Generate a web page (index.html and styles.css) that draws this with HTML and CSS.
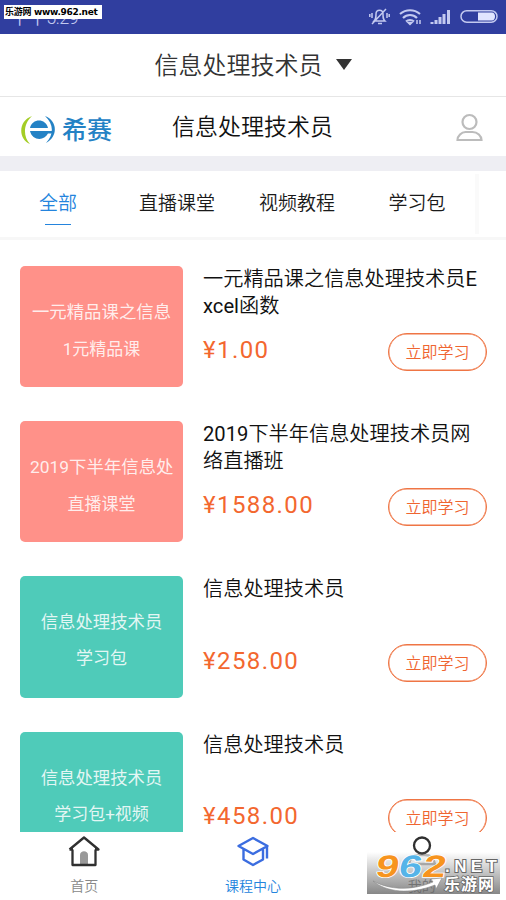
FILE: index.html
```html
<!DOCTYPE html>
<html lang="zh-CN">
<head>
<meta charset="utf-8">
<title>信息处理技术员</title>
<link rel="stylesheet" href="styles.css">
</head>
<body>
<div class="app">
  <div class="status">
    <span class="time">下午5:29</span>
    <svg class="status-icons" width="134" height="24" viewBox="0 0 134 24" fill="none" stroke="#c3c9f0" stroke-width="1.5">
      <path d="M4 17h11c-2-2-2-3-2-7 0-5-7-5-7 0 0 4 0 5-2 7ZM8 19.5h4M2 20 16 5M2 9v5M-.2 10v3M17 9v5M19.2 10v3"/>
      <path d="M30 10c6-5 14-5 20 0M33 14c4-4 10-4 14 0M36 17.500c2-2 6-2 8 0" stroke-width="2.200"/>
      <path d="m38 18.500 2 2 2-2Z" fill="#c3c9f0"/>
      <path d="M47 16v4M50 16v4" stroke-width="1.5"/>
      <path d="M62 20v-2M66 20v-4M70 20v-7M74 20v-10M78.500 20V6" stroke-width="3"/>
      <rect x="91" y="6.700" width="36" height="11.500" rx="5.750"/>
      <path d="M108 8.500h14c4 0 4 8 0 8h-14Z" fill="#e1e5ff" stroke="none"/>
    </svg>
  </div>
  <header class="subject"><span>信息处理技术员</span><i class="caret"></i></header>
  <div class="brandbar">
    <div class="brand">
      <svg width="38" height="32" viewBox="0 0 38 32">
        <path d="M12 2C-2 7-2 25 10 30 3 23 3 10 12 2Z" fill="#a4cd25"/>
        <path d="M25 2c13 5 13 21 1 27 8-8 8-19-1-27Z" fill="#2482c5"/>
        <path d="M10 14c2-10 16-10 18 0ZM10 17h24v2.500h-6c-4 8-16 7-18-2.500Z" fill="#2482c5"/>
      </svg>
      <span>希赛</span>
    </div>
    <h1>信息处理技术员</h1>
    <svg class="person" width="28" height="30" viewBox="0 0 28 30" fill="none" stroke="#bcbcbc" stroke-width="2.200"><circle cx="14.500" cy="9" r="7"/><path d="M2.500 27c0-4 4-8 8-8h7c5 0 9 4 9 8Z"/></svg>
  </div>
  <nav class="tabs">
    <span class="tab active">全部</span><span class="tab">直播课堂</span><span class="tab">视频教程</span><span class="tab">学习包</span>
  </nav>
  <main class="list">
    <article class="course">
      <div class="cover coral"><p class="name">一元精品课之信息</p><p class="kind">1元精品课</p></div>
      <div class="info"><h2>一元精品课之信息处理技术员<span class="latin">Excel</span>函数</h2><div class="buy"><b>¥1.00</b><span class="btn">立即学习</span></div></div>
    </article>
    <article class="course">
      <div class="cover coral"><p class="name">2019下半年信息处</p><p class="kind">直播课堂</p></div>
      <div class="info"><h2><span class="latin">2019</span>下半年信息处理技术员网络直播班</h2><div class="buy"><b>¥1588.00</b><span class="btn">立即学习</span></div></div>
    </article>
    <article class="course">
      <div class="cover teal"><p class="name">信息处理技术员</p><p class="kind">学习包</p></div>
      <div class="info"><h2>信息处理技术员</h2><div class="buy"><b>¥258.00</b><span class="btn">立即学习</span></div></div>
    </article>
    <article class="course">
      <div class="cover teal"><p class="name">信息处理技术员</p><p class="kind">学习包+视频</p></div>
      <div class="info"><h2>信息处理技术员</h2><div class="buy"><b>¥458.00</b><span class="btn">立即学习</span></div></div>
    </article>
  </main>
  <footer class="bottom">
    <div class="item">
      <svg width="34" height="34" viewBox="0 0 34 34"><path d="M13 29v-9c0-5 8-5 8 0v9Z" fill="#999"/><path d="M5.500 14.500V30h23V14.500M2.500 14.500 17 2.500l14.500 12H28M2.500 14.500H6" fill="none" stroke="#303030" stroke-width="2.300" stroke-linejoin="round"/></svg>
      <span>首页</span>
    </div>
    <div class="item on">
      <svg width="34" height="34" viewBox="0 0 34 34" fill="none" stroke="#3b6de0" stroke-width="2.400" stroke-linejoin="round"><path d="m2.500 11 14.500-8 14.500 8L17 19ZM7.500 14.500v10L17 30l10-5.500v-10M31 11.500v12"/></svg>
      <span>课程中心</span>
    </div>
    <div class="item">
      <svg width="34" height="34" viewBox="0 0 34 34" fill="none" stroke="#303030" stroke-width="2.300"><circle cx="17" cy="10.500" r="8"/><path d="M4 29c1-6 5-9 10-9h6c5 0 9 3 10 9Z" opacity=".35"/></svg>
      <span>我的</span>
    </div>
  </footer>
  <div class="source">乐游网 www.962.net</div>
  <div class="mark">
    <svg width="139" height="42" viewBox="0 0 139 42">
      <g class="digits" transform="skewX(-10)"><text x="12" y="25" textLength="23" lengthAdjust="spacingAndGlyphs" fill="#f7941e">9</text><text x="35" y="25" textLength="23" lengthAdjust="spacingAndGlyphs" fill="#55b4e8">6</text><text x="59" y="25" textLength="23" lengthAdjust="spacingAndGlyphs" fill="#f7941e">2</text></g>
      <path d="M6 29c17 9 38 10 60 1l-2-3 11-1-6 11-1-4C43 43 19 40 6 29Z" fill="#fff" stroke="#888" stroke-width=".6"/>
      <text class="net" x="78" y="20" textLength="52">.NET</text>
      <text class="site" x="77" y="38" textLength="50">乐游网</text>
    </svg>
  </div>
</div>
</body>
</html>
```
FILE: styles.css
```css
* { box-sizing: border-box; }
body { margin: 0; background: #fff; font-family: Roboto, "Noto Sans CJK SC", sans-serif; font-weight: 350; color: #1a1a1a; }
h1, h2, p { margin: 0; font-weight: 350; }
svg { display: block; }
.app { position: relative; width: 506px; height: 900px; overflow: hidden; display: flex; flex-direction: column; }
.status { flex: none; height: 34px; background: #303e9f; display: flex; justify-content: space-between; padding: 4px 2px 0 11px; }
.time { font-size: 18px; line-height: 28px; color: #c3c9f0; letter-spacing: -.4px; }
.status-icons { overflow: visible; }
.subject { flex: none; height: 63px; border-bottom: 1px solid #e6e6e6; display: flex; align-items: center; justify-content: center; gap: 13px; font-size: 24px; line-height: 36px; color: #333; padding: 2px 0 0; }
.caret { border: 8px solid transparent; border-top: 11px solid #333; border-bottom: 0; margin-top: -3px; }
.brandbar { flex: none; height: 59px; display: grid; grid-template-columns: 130px 1fr 130px; align-items: center; padding: 0 21px 0 20px; }
.brand { display: flex; align-items: center; gap: 4px; margin-top: 6px; color: #2482c5; font-size: 25px; font-weight: 500; line-height: 32px; }
.brand span { margin-top: 2px; }
.brandbar h1 { font-size: 23px; line-height: 34px; text-align: center; color: #111; white-space: nowrap; padding: 3px 0 0; }
.person { justify-self: end; margin: 3px 2px 0 0; }
.tabs { flex: none; height: 84px; border-top: 15px solid #eeeef3; border-bottom: 3px solid #f7f7f7; display: grid; grid-template-columns: repeat(4, 120px); font-size: 19px; width: 506px; background: linear-gradient(#fafafa, #fafafa) 475px 3px / 4px 60px no-repeat; }
.tab { display: flex; flex-direction: column; align-items: center; line-height: 28px; padding: 19px 6px 0 0; }
.tab.active { color: #2484dd; padding-right: 4px; }
.active::after { content: ""; width: 26px; height: 1px; margin-top: 6px; background: #2484dd; }
.list { flex: 1; min-height: 0; overflow: hidden; padding: 26px 19px 0 20px; display: flex; flex-direction: column; gap: 34px; }
.course { flex: none; height: 121.200px; display: flex; gap: 20px; }
.cover { width: 163px; border-radius: 5px; padding: 32px 10px 0; color: rgba(255, 255, 255, .85); text-align: center; overflow: hidden; white-space: nowrap; }
.coral { background: #ff9189; }
.teal { background: #4fcbb9; }
.cover p { font-weight: 400; }
.name { font-size: 17.400px; line-height: 28px; }
.kind { font-size: 17px; line-height: 28px; margin-top: 9px; }
.teal .kind { margin-top: 8px; }
.info { flex: 1; min-width: 0; display: flex; flex-direction: column; justify-content: space-between; padding-bottom: 16px; }
.info h2 { width: 278px; font-size: 20.200px; line-height: 27px; word-break: break-all; color: #111; }
.latin { font-weight: 400; }
.buy { display: flex; justify-content: space-between; align-items: center; }
.buy b { font-weight: 400; font-size: 24px; letter-spacing: 1.400px; line-height: 32px; color: #f3672f; margin-top: -4px; }
.btn { width: 99px; height: 38px; border: 1.500px solid #ef7544; border-radius: 19px; color: #ef6530; font-size: 16px; line-height: 38px; text-align: center; box-shadow: inset 0 0 0 .4px #ef7544; }
.bottom { flex: none; height: 68px; background: #fff; display: grid; grid-template-columns: repeat(3, 1fr); padding-top: 3px; }
.item { display: flex; flex-direction: column; align-items: center; gap: 7px; font-size: 14px; line-height: 20px; color: #888; }
.on { color: #2484dd; }
.source { position: absolute; left: 4px; top: 5px; width: 98px; height: 14px; background: #fff; color: #000; font: bold 9px/14px "DejaVu Sans", "Noto Sans CJK SC", sans-serif; white-space: nowrap; letter-spacing: -.3px; padding-left: 1px; }
.mark { position: absolute; left: 367px; top: 852px; width: 133px; height: 42px; background: linear-gradient(rgba(255, 255, 255, .05), rgba(95, 95, 95, .75)); }
.mark svg { width: 139px; height: 42px; overflow: visible; }
.digits { font: bold 31px "Liberation Sans", sans-serif; stroke: #fff; stroke-width: 1.500px; paint-order: stroke; }
.net { font: bold 17px "Liberation Sans", sans-serif; fill: #fff; stroke: #666; stroke-width: 2px; paint-order: stroke; }
.site { font: bold 16px "Noto Sans CJK SC", sans-serif; fill: #fff; stroke: #666; stroke-width: 1.500px; paint-order: stroke; }
```
